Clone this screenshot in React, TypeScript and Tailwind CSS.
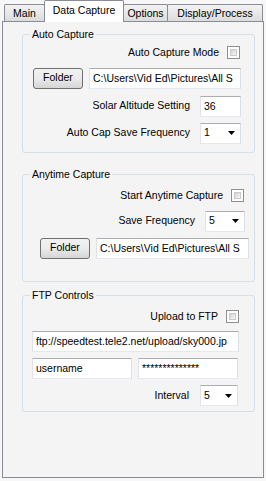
import React from "react";

const font = { fontFamily: '"Liberation Sans", Arial, sans-serif' };

function Tab({ label, selected, w }: { label: string; selected?: boolean; w: string }) {
  if (selected) {
    return (
      <div className={`${w} relative z-10 -mb-px flex h-[22px] items-start justify-center border border-b-0 border-[#898c95] bg-white pt-[2px] rounded-t-[2px]`}>
        {label}
      </div>
    );
  }
  return (
    <div className={`${w} flex h-[17px] items-start justify-center border border-b-0 border-[#898c95] bg-gradient-to-b from-[#f3f3f3] to-[#dcdcdc] pt-[1px] rounded-t-[2px] -ml-px first:ml-0`}>
      {label}
    </div>
  );
}

function CheckBox() {
  return (
    <div className="h-[13px] w-[13px] border border-[#8e8f8f] bg-white p-[2px]">
      <div className="h-full w-full border border-[#c9c9c9] bg-gradient-to-br from-[#d3d3d3] to-[#f6f6f6]" />
    </div>
  );
}

function TextBox({ value, w }: { value: string; w: string }) {
  return (
    <div className={`${w} h-[21px] overflow-hidden whitespace-nowrap border border-[#abadb3] border-r-[#dbdfe6] border-b-[#e3e9ef] border-l-[#e2e3ea] bg-white pl-[3px] pt-[3px] leading-[13px]`}>
      {value}
    </div>
  );
}

function Combo({ value, w }: { value: string; w: string }) {
  return (
    <div className={`${w} flex h-[21px] items-center justify-between border border-[#abadb3] border-r-[#dbdfe6] border-b-[#e3e9ef] border-l-[#e2e3ea] bg-white pl-[3px] pr-[5px]`}>
      <span>{value}</span>
      <svg width="7" height="4" viewBox="0 0 7 4">
        <path d="M0 0h7L3.5 4z" fill="#000" />
      </svg>
    </div>
  );
}

function Button({ label }: { label: string }) {
  return (
    <div className="flex h-[21px] w-[50px] items-center justify-center rounded-[3px] border border-[#707070] bg-gradient-to-b from-[#f2f2f2] via-[#ebebeb] to-[#d5d5d5]">
      {label}
    </div>
  );
}

function Group({ title, className, children }: { title: string; className: string; children: React.ReactNode }) {
  return (
    <fieldset className={`w-[233px] rounded-[3px] border border-[#d5dfe5] ${className}`}>
      <legend className="ml-[7px] px-[2px] leading-[13px]">{title}</legend>
      {children}
    </fieldset>
  );
}

export default function App() {
  return (
    <div className="h-[481px] w-[266px] bg-[#f7f7f7] text-[10.5px] text-black" style={font}>
      {/* tab strip */}
      <div className="flex h-[21px] items-end pl-[4px]">
        <Tab label="Main" w="w-[41px]" />
        <Tab label="Data Capture" w="w-[80px] -ml-px" selected />
        <Tab label="Options" w="w-[45px] -ml-px" />
        <Tab label="Display/Process" w="w-[96px]" />
      </div>

      {/* tab page */}
      <div className="mx-[2px] h-[457px] w-[262px] border border-[#898c95] bg-[#f4f4f4] pl-[19px]">
        <Group title="Auto Capture" className="mt-[6px] pb-[8px]">
          <div className="mt-[4px] flex items-center justify-end gap-[8px] pr-[14px]">
            <span>Auto Capture Mode</span>
            <CheckBox />
          </div>
          <div className="mt-[7px] flex items-center pl-[10px]">
            <Button label="Folder" />
            <div className="ml-[6px]">
              <TextBox value="C:\Users\Vid Ed\Pictures\All S" w="w-[152px]" />
            </div>
          </div>
          <div className="mt-[7px] flex items-center justify-end gap-[10px] pr-[13px]">
            <span>Solar Altitude Setting</span>
            <TextBox value="36" w="w-[41px]" />
          </div>
          <div className="mt-[6px] flex items-center justify-end gap-[10px] pr-[13px]">
            <span>Auto Cap Save Frequency</span>
            <Combo value="1" w="w-[41px]" />
          </div>
        </Group>

        <Group title="Anytime Capture" className="mt-[15px] pb-[22px]">
          <div className="mt-[7px] flex items-center justify-end gap-[8px] pr-[10px]">
            <span>Start Anytime Capture</span>
            <CheckBox />
          </div>
          <div className="mt-[7px] flex items-center justify-end gap-[10px] pr-[9px]">
            <span>Save Frequency</span>
            <Combo value="5" w="w-[40px]" />
          </div>
          <div className="mt-[6px] flex items-center pl-[17px]">
            <Button label="Folder" />
            <div className="ml-[6px]">
              <TextBox value="C:\Users\Vid Ed\Pictures\All S" w="w-[153px]" />
            </div>
          </div>
        </Group>

        <Group title="FTP Controls" className="mt-[7px] pb-[5px]">
          <div className="mt-[7px] flex items-center justify-end gap-[8px] pr-[15px]">
            <span>Upload to FTP</span>
            <CheckBox />
          </div>
          <div className="mt-[7px] pl-[9px]">
            <TextBox value="ftp://speedtest.tele2.net/upload/sky000.jp" w="w-[207px]" />
          </div>
          <div className="mt-[6px] flex gap-[6px] pl-[9px]">
            <TextBox value="username" w="w-[100px]" />
            <TextBox value="**************" w="w-[100px]" />
          </div>
          <div className="mt-[6px] flex items-center justify-end gap-[11px] pr-[16px]">
            <span>Interval</span>
            <Combo value="5" w="w-[38px]" />
          </div>
        </Group>
      </div>
    </div>
  );
}
